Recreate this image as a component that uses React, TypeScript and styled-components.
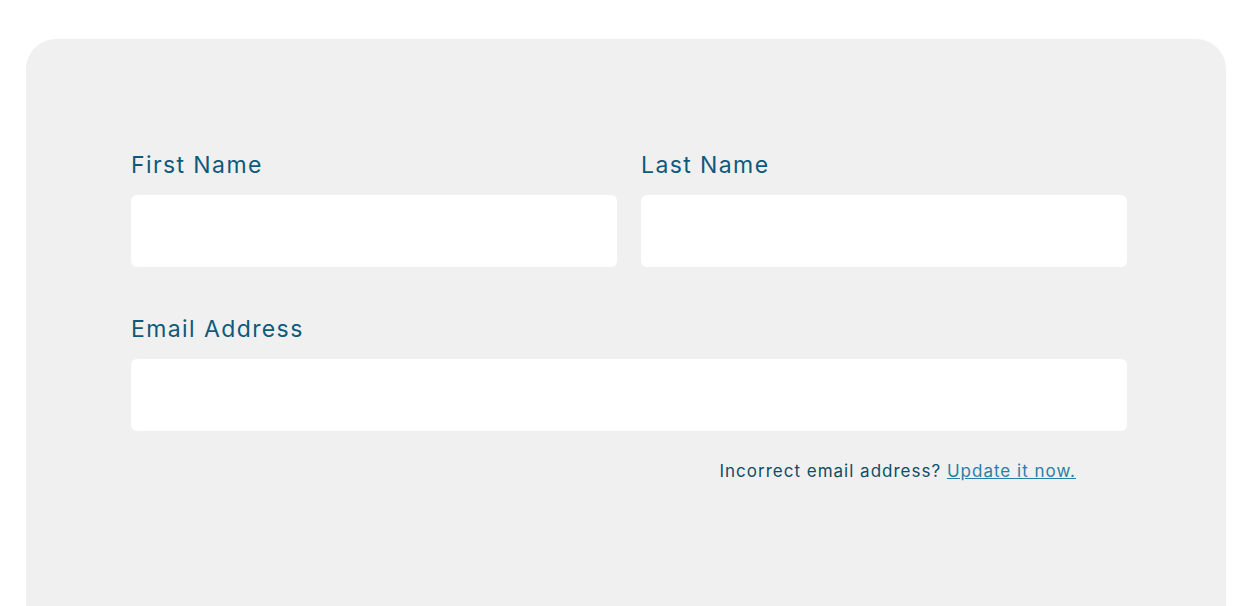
import React from "react";
import styled, {createGlobalStyle} from "styled-components";

const GlobalStyle = createGlobalStyle`
    body {
        margin: 0;
        background: #fff;
        font-family: Inter, "Open Sans", sans-serif;
    }
`

const Page = styled.div`
    padding: 39px 23px 0 26px;
`

const Card = styled.div`
    background: #f0f0f0;
    border-radius: 30px 30px 0 0;
    height: 567px;
    padding: 107px 99px 0 105px;
    box-sizing: border-box;
`

const Row = styled.div`
    display: grid;
    grid-template-columns: 1fr 1fr;
    column-gap: 24px;
    margin-bottom: 43px;
`

const Field = styled.div`
    display: flex;
    flex-direction: column;
`

const Label = styled.label`
    font-size: 23px;
    line-height: 38px;
    letter-spacing: 1.4px;
    color: #0d5a7a;
    margin-bottom: 11px;
`

const Input = styled.input`
    height: 72px;
    border: none;
    border-radius: 6px;
    background: #fff;
    outline: none;
    padding: 0 16px;
    font-size: 18px;
    box-sizing: border-box;
`

const Hint = styled.p`
    margin: 30px 51px 0 0;
    text-align: right;
    font-size: 17px;
    letter-spacing: 1px;
    color: #0f4d68;

    > a {
        color: #2a7fa8;
        text-decoration: underline;
    }
`

function App() {
    return (
        <Page>
            <GlobalStyle/>
            <Card>
                <Row>
                    <Field>
                        <Label>First Name</Label>
                        <Input/>
                    </Field>
                    <Field>
                        <Label>Last Name</Label>
                        <Input/>
                    </Field>
                </Row>
                <Field>
                    <Label>Email Address</Label>
                    <Input/>
                </Field>
                <Hint>Incorrect email address? <a href="#">Update it now.</a></Hint>
            </Card>
        </Page>
    );
}

export default App
